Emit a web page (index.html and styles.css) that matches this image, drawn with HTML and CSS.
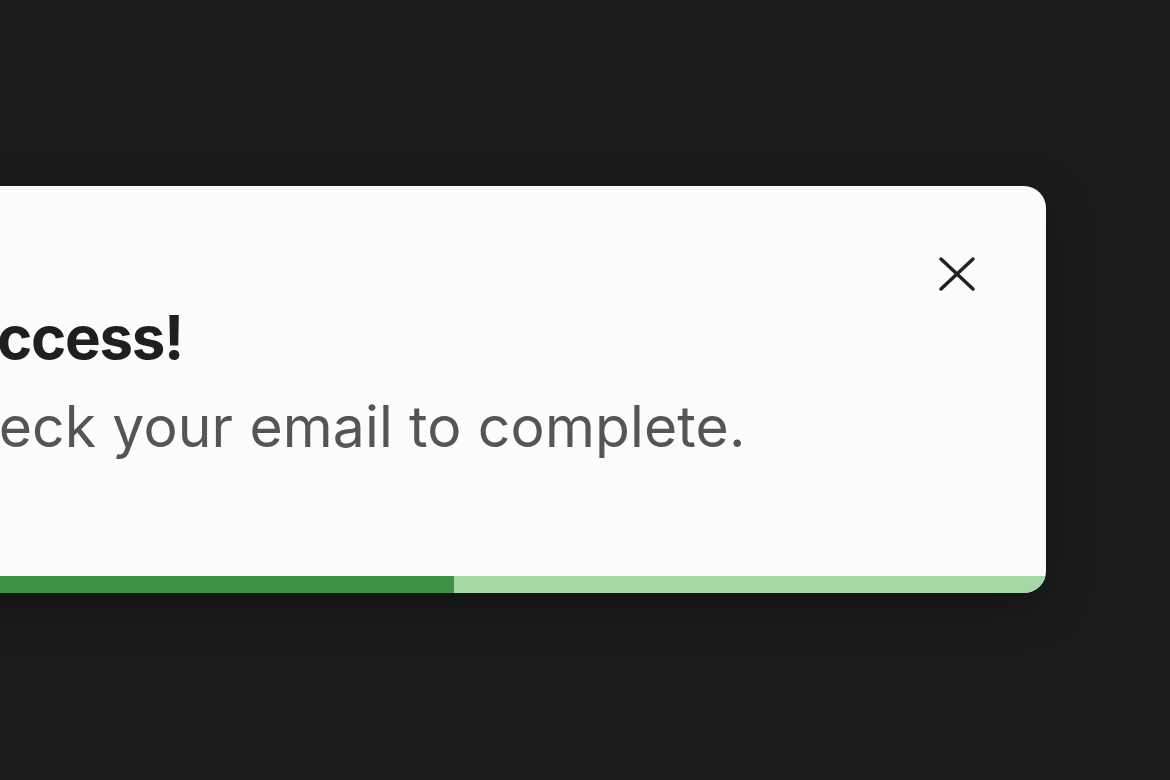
FILE: index.html
```html
<!DOCTYPE html>
<html lang="en">
<head>
<meta charset="utf-8">
<title>Toast</title>
<link rel="stylesheet" href="styles.css">
</head>
<body>
  <div class="stage">
    <div class="toast">
      <div class="toast-body">
        <div class="toast-text">
          <h2 class="toast-title">Success!</h2>
          <p class="toast-message">Check your email to complete.</p>
        </div>
        <button class="toast-close" aria-label="Close">
          <svg width="38" height="36" viewBox="0 0 38 36" fill="none" stroke="#222222" stroke-width="3.5" stroke-linecap="round">
            <path d="M3 3 L35 33"/>
            <path d="M35 3 L3 33"/>
          </svg>
        </button>
      </div>
      <div class="toast-progress">
        <div class="toast-progress-fill" style="width: 654px"></div>
      </div>
    </div>
  </div>
</body>
</html>
```

FILE: styles.css
```css
html, body {
  margin: 0;
  padding: 0;
  background: #1c1c1e;
  overflow: hidden;
}

.stage {
  width: 1170px;
  height: 780px;
  padding-top: 186px;
  box-sizing: border-box;
}

.toast {
  margin-left: -200px;
  width: 1246px;
  height: 407px;
  background: #fcfcfc;
  border-radius: 0 22px 22px 0;
  overflow: hidden;
  display: flex;
  flex-direction: column;
  box-shadow: 0 12px 48px rgba(0, 0, 0, 0.35);
}

.toast-body {
  flex: 1;
  display: flex;
  justify-content: space-between;
  align-items: flex-start;
  padding: 70px 70px 0 123px;
}

.toast-text {
  font-family: Inter, "Liberation Sans", sans-serif;
  padding-top: 44px;
}

.toast-title {
  margin: 0;
  font-size: 60px;
  font-weight: 700;
  line-height: 74px;
  color: #1f1f1f;
  letter-spacing: -1.3px;
}

.toast-message {
  margin: 19px 0 0;
  font-size: 57px;
  font-weight: 400;
  line-height: 68px;
  color: #555555;
  letter-spacing: 0.15px;
}

.toast-close {
  background: none;
  border: 0;
  padding: 0;
  margin: 0;
  width: 38px;
  height: 36px;
  display: block;
  cursor: pointer;
}

.toast-close svg {
  display: block;
}

.toast-progress {
  height: 17px;
  background: #a4d9a5;
}

.toast-progress-fill {
  height: 100%;
  background: #3e9243;
}
```
